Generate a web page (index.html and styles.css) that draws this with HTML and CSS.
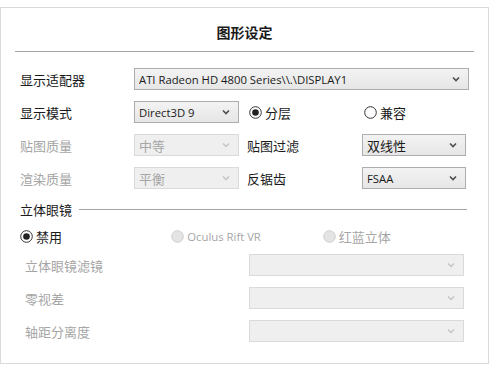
FILE: index.html
```html
<!DOCTYPE html>
<html lang="zh-CN">
<head>
    <meta charset="UTF-8">
    <title>图形设定</title>
    <link rel="stylesheet" href="styles.css">
</head>
<body>
    <div class="panel">
        <div class="title">图形设定</div>
        <div class="rule"></div>
        <div class="form">
            <div class="row">
                <span class="lbl">显示适配器</span>
                <div class="select wide"><span class="val latin">ATI Radeon HD 4800 Series\\.\DISPLAY1</span><svg class="chev" width="8" height="6" viewBox="0 0 8 6"><path d="M1 1.5 L4 4.5 L7 1.5" fill="none" stroke-width="1.6"/></svg></div>
            </div>
            <div class="row">
                <span class="lbl">显示模式</span>
                <div class="select small"><span class="val latin">Direct3D 9</span><svg class="chev" width="8" height="6" viewBox="0 0 8 6"><path d="M1 1.5 L4 4.5 L7 1.5" fill="none" stroke-width="1.6"/></svg></div>
                <div class="radios">
                    <div class="radio on"><svg width="13" height="13" viewBox="0 0 13 13"><circle cx="6.5" cy="6.5" r="5.8" fill="#fff" stroke="#333" stroke-width="1"/><circle cx="6.5" cy="6.5" r="3.3" fill="#222"/></svg><span>分层</span></div>
                    <div class="radio"><svg width="13" height="13" viewBox="0 0 13 13"><circle cx="6.5" cy="6.5" r="5.8" fill="#fff" stroke="#333" stroke-width="1"/></svg><span>兼容</span></div>
                </div>
            </div>
            <div class="row">
                <span class="lbl off">贴图质量</span>
                <div class="select small off"><span class="val">中等</span><svg class="chev" width="8" height="6" viewBox="0 0 8 6"><path d="M1 1.5 L4 4.5 L7 1.5" fill="none" stroke-width="1.4"/></svg></div>
                <span class="lbl right">贴图过滤</span>
                <div class="select small2"><span class="val">双线性</span><svg class="chev" width="8" height="6" viewBox="0 0 8 6"><path d="M1 1.5 L4 4.5 L7 1.5" fill="none" stroke-width="1.6"/></svg></div>
            </div>
            <div class="row">
                <span class="lbl off">渲染质量</span>
                <div class="select small off"><span class="val">平衡</span><svg class="chev" width="8" height="6" viewBox="0 0 8 6"><path d="M1 1.5 L4 4.5 L7 1.5" fill="none" stroke-width="1.4"/></svg></div>
                <span class="lbl right">反锯齿</span>
                <div class="select small2"><span class="val latin">FSAA</span><svg class="chev" width="8" height="6" viewBox="0 0 8 6"><path d="M1 1.5 L4 4.5 L7 1.5" fill="none" stroke-width="1.6"/></svg></div>
            </div>

            <div class="group">
                <span>立体眼镜</span>
                <div class="line"></div>
            </div>
            <div class="stereo">
                <div class="radio on"><svg width="13" height="13" viewBox="0 0 13 13"><circle cx="6.5" cy="6.5" r="5.8" fill="#fff" stroke="#333" stroke-width="1"/><circle cx="6.5" cy="6.5" r="3.3" fill="#222"/></svg><span>禁用</span></div>
                <div class="radio off"><svg width="13" height="13" viewBox="0 0 13 13"><circle cx="6.5" cy="6.5" r="5.8" fill="#e4e4e4" stroke="#cfcfcf" stroke-width="1"/></svg><span class="latin">Oculus Rift VR</span></div>
                <div class="radio off"><svg width="13" height="13" viewBox="0 0 13 13"><circle cx="6.5" cy="6.5" r="5.8" fill="#e4e4e4" stroke="#cfcfcf" stroke-width="1"/></svg><span>红蓝立体</span></div>
            </div>
            <div class="row sub">
                <span class="lbl off">立体眼镜滤镜</span>
                <div class="select long off"><span class="val"></span><svg class="chev" width="8" height="6" viewBox="0 0 8 6"><path d="M1 1.5 L4 4.5 L7 1.5" fill="none" stroke-width="1.4"/></svg></div>
            </div>
            <div class="row sub">
                <span class="lbl off">零视差</span>
                <div class="select long off"><span class="val"></span><svg class="chev" width="8" height="6" viewBox="0 0 8 6"><path d="M1 1.5 L4 4.5 L7 1.5" fill="none" stroke-width="1.4"/></svg></div>
            </div>
            <div class="row sub">
                <span class="lbl off">轴距分离度</span>
                <div class="select long off"><span class="val"></span><svg class="chev" width="8" height="6" viewBox="0 0 8 6"><path d="M1 1.5 L4 4.5 L7 1.5" fill="none" stroke-width="1.4"/></svg></div>
            </div>
        </div>
    </div>
</body>
</html>
```

FILE: styles.css
```css
body { margin: 0; padding: 0; background-color: #fff; font-family: "Noto Sans CJK SC", "Noto Sans", sans-serif; font-size: 13px; color: #1a1a1a; }
.panel { margin-top: 7px; width: 489px; height: 357px; border: 1px solid #dadada; padding: 0 14px; box-sizing: border-box; }
.title { padding-top: 14px; height: 20px; line-height: 20px; text-align: center; font-weight: bold; font-size: 14px; }
.rule { margin-top: 9px; border-top: 1px solid #a5a5a5; }
.form { padding-left: 5px; padding-top: 16px; }
.row { display: flex; align-items: center; height: 22px; margin-bottom: 11px; }
.lbl { width: 114px; flex: none; white-space: nowrap; }
.lbl.right { width: 115px; margin-left: 8px; }
.off { color: #a6a6a6; }
.latin { font-family: "Open Sans", "Noto Sans CJK SC", sans-serif; font-size: 11.3px; }
.select { height: 22px; box-sizing: border-box; border: 1px solid #adadad; background: linear-gradient(#f3f3f3, #e6e6e6); display: flex; align-items: center; padding: 0 8px 0 4px; flex: none; }
.select .val { flex: 1; white-space: nowrap; overflow: hidden; }
.select .chev { stroke: #4d4d4d; flex: none; }
.select.off { background: #efefef; border-color: #dadada; }
.select.off .chev { stroke: #c4c4c4; }
.wide { width: 335px; }
.small { width: 105px; }
.small2 { width: 104px; }
.long { width: 215px; }
.radios { display: flex; margin-left: 10px; }
.radio { display: flex; align-items: center; gap: 3px; width: 115px; white-space: nowrap; }
.radio svg { flex: none; }
.group { display: flex; align-items: center; height: 18px; margin-top: 4px; }
.group .line { flex: 1; border-top: 1px solid #a5a5a5; margin: 0 7px 0 7px; }
.stereo { display: flex; align-items: center; height: 16px; margin-top: 10px; margin-bottom: 10px; }
.stereo .radio { width: 153px; }
.sub { padding-left: 5px; }
.sub .lbl { width: auto; }
.sub .lbl + .select { margin-left: auto; margin-right: 10px; }
```
